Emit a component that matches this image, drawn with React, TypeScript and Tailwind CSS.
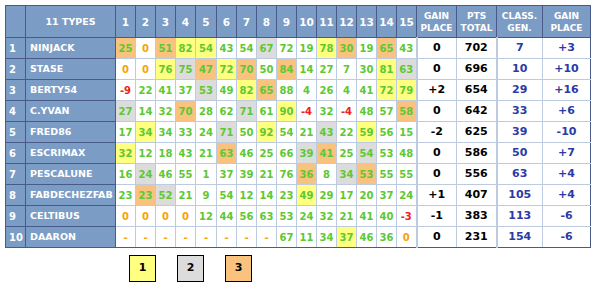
import React from 'react';

type Row = {
  rank: number;
  name: string;
  dark?: boolean;
  days: string;
  gain: string;
  pts: number;
  gen: number;
  genGain: string;
};

const rows: Row[] = [
  { rank: 1, name: 'NINJACK', days: '25o 0 51o 82y 54y 43 54 67g 72 19 78y 30o 19 65o 43', gain: '0', pts: 702, gen: 7, genGain: '+3' },
  { rank: 2, name: 'STASE', days: '0 0 76y 75g 47o 72y 70o 50 84o 14 27 7 30 81y 63g', gain: '0', pts: 696, gen: 10, genGain: '+10' },
  { rank: 3, name: 'BERTY54', dark: true, days: '-9 22 41 37 53g 49 82y 65o 88 4 26 4 41 72y 79y', gain: '+2', pts: 654, gen: 29, genGain: '+16' },
  { rank: 4, name: 'C.YVAN', days: '27g 14 32 70o 28 62 71g 61 90y -4 32 -4 48 57 58o', gain: '0', pts: 642, gen: 33, genGain: '+6' },
  { rank: 5, name: 'FRED86', days: '17 34y 34 33 24 71g 50 92y 54 21 43g 22 59y 56 15', gain: '-2', pts: 625, gen: 39, genGain: '-10' },
  { rank: 6, name: 'ESCRIMAX', days: '32y 12 18 43 21 63o 46 25 66 39g 41o 25 54g 53 48', gain: '0', pts: 586, gen: 50, genGain: '+7' },
  { rank: 7, name: 'PESCALUNE', days: '16 24g 46 55 1 37 39 21 76 36o 8 34g 53o 55 55', gain: '0', pts: 556, gen: 63, genGain: '+4' },
  { rank: 8, name: 'FABDECHEZFAB', days: '23 23o 52g 21 9 54 12 14 23 49y 29 17 20 37 24', gain: '+1', pts: 407, gen: 105, genGain: '+4' },
  { rank: 9, name: 'CELTIBUS', days: '0 0 0 0 12 44 56 63 53 24 32 21 41 40 -3', gain: '-1', pts: 383, gen: 113, genGain: '-6' },
  { rank: 10, name: 'DAARON', days: '- - - - - - - - 67 11 34 37y 46 36 0', gain: '0', pts: 231, gen: 154, genGain: '-6' },
];

const bgFor: Record<string, string> = {
  y: 'bg-[#ffff80]',
  g: 'bg-[#dcdcdc]',
  o: 'bg-[#f9c27e]',
  '': 'bg-white',
};

function scoreColor(v: string) {
  if (v === '0' || v === '-') return 'text-[#f5a500]';
  if (v.startsWith('-')) return 'text-[#f02020]';
  return 'text-[#5cc832]';
}

const head = 'border border-[#4a5a88] bg-[#7b9cc5] text-white';
const cell = 'border border-[#bccbe0]';

export default function App() {
  return (
    <div className="bg-white w-[596px] h-[288px] pt-[5px] pl-[5px] font-['DejaVu_Sans',sans-serif] font-bold">
      <table className="table-fixed border-collapse w-[585px]">
        <colgroup>
          <col className="w-[20px]" />
          <col className="w-[90px]" />
          {Array.from({ length: 15 }).map((_, i) => (
            <col key={i} className={i === 4 ? 'w-[21px]' : 'w-[20px]'} />
          ))}
          <col className="w-[40px]" />
          <col className="w-[40px]" />
          <col className="w-[46px]" />
          <col className="w-[48px]" />
        </colgroup>
        <thead>
          <tr className="h-[32px] text-[9px] leading-[12px]">
            <th className={head}></th>
            <th className={`${head} text-[9.5px]`}>11 TYPES</th>
            {Array.from({ length: 15 }).map((_, i) => (
              <th key={i} className={`${head} text-[10.5px]`}>
                {i + 1}
              </th>
            ))}
            <th className={head}>
              GAIN
              <br />
              PLACE
            </th>
            <th className={head}>
              PTS
              <br />
              TOTAL
            </th>
            <th className={head}>
              CLASS.
              <br />
              GEN.
            </th>
            <th className={head}>
              GAIN
              <br />
              PLACE
            </th>
          </tr>
        </thead>
        <tbody>
          {rows.map((r, ri) => {
            const last = ri === rows.length - 1;
            const bottom = last ? 'border-b-[#4a5a88]' : '';
            return (
              <tr key={r.rank} className="h-[21px]">
                <td className={`${head} text-left pl-[3px] text-[10px]`}>{r.rank}</td>
                <td className={`${head} text-left pl-[4px] text-[9.5px] ${r.dark ? 'text-black' : ''}`}>
                  {r.name}
                </td>
                {r.days.split(' ').map((d, i) => {
                  const m = d.match(/^(-?\d+|-)([ygo]?)$/);
                  const v = m ? m[1] : d;
                  const bg = bgFor[m ? m[2] : ''];
                  return (
                    <td key={i} className={`${cell} ${bottom} ${bg} ${scoreColor(v)} text-center text-[10px]`}>
                      {v}
                    </td>
                  );
                })}
                <td className={`${cell} ${bottom} border-l-2 text-center text-[11px] text-black`}>{r.gain}</td>
                <td className={`${cell} ${bottom} text-center text-[11px] text-black`}>{r.pts}</td>
                <td className={`${cell} ${bottom} border-l-2 text-center text-[11px] text-[#2b3aa5]`}>{r.gen}</td>
                <td className={`${cell} ${bottom} border-r-[#4a5a88] text-center text-[11px] text-[#2b3aa5]`}>
                  {r.genGain}
                </td>
              </tr>
            );
          })}
        </tbody>
      </table>

      {/* legend */}
      <div className="flex gap-[21px] ml-[124px] mt-[7px] text-[11px] text-black">
        <div className="w-[27px] h-[27px] border border-black bg-[#ffff80] flex items-center justify-center">1</div>
        <div className="w-[27px] h-[27px] border border-black bg-[#dcdcdc] flex items-center justify-center">2</div>
        <div className="w-[27px] h-[27px] border border-black bg-[#f9c27e] flex items-center justify-center">3</div>
      </div>
    </div>
  );
}
